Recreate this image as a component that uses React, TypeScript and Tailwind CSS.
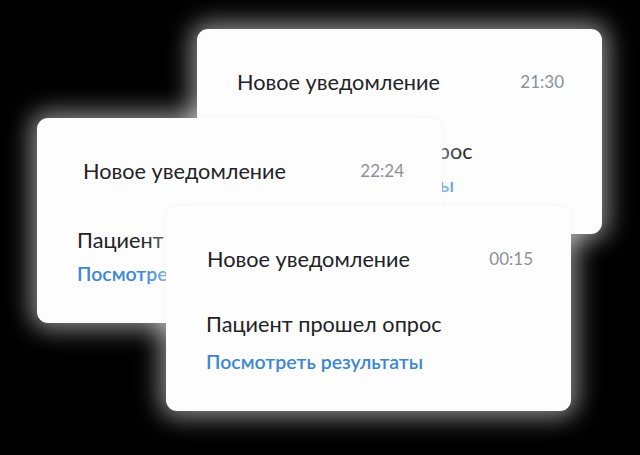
import React from 'react';

type Note = {
  id: string;
  time: string;
  pos: string; // card placement on the canvas
  titleGap: string;
  bodyGap: string;
  linkGap: string;
};

const notes: Note[] = [
  { id: 'a', time: '21:30', pos: 'z-10 left-[197px] top-[29px]', titleGap: 'ml-0', bodyGap: 'mt-[41px]', linkGap: 'mt-[8px]' },
  { id: 'b', time: '22:24', pos: 'z-20 left-[37px] top-[118px]', titleGap: 'ml-[6px]', bodyGap: 'mt-[41px]', linkGap: 'mt-[8px]' },
  { id: 'c', time: '00:15', pos: 'z-30 left-[166px] top-[206px]', titleGap: 'ml-px', bodyGap: 'mt-[37px]', linkGap: 'mt-[12px]' },
];

function NotificationCard({ note }: { note: Note }) {
  return (
    <div
      className={`absolute ${note.pos} flex h-[205px] w-[405px] flex-col rounded-[11px] bg-[#fdfdfd] pl-[40px] pr-[38px] pt-[39px] shadow-[0_0_24px_6px_rgba(255,255,255,0.55),0_0_6px_rgba(0,0,0,0.08)]`}
    >
      <div className="flex items-center justify-between">
        <span className={`${note.titleGap} whitespace-nowrap text-[21.7px] leading-[28px] text-[#222326]`}>
          Новое уведомление
        </span>
        <span className="text-[17px] leading-[28px] text-[#8c9099]">{note.time}</span>
      </div>
      <p className={`${note.bodyGap} whitespace-nowrap text-[21.7px] leading-[28px] text-[#222326]`}>
        Пациент прошел опрос
      </p>
      <a
        className={`${note.linkGap} block whitespace-nowrap text-[19.5px] font-semibold leading-[24px] text-[#3b86d6]`}
      >
        Посмотреть результаты
      </a>
    </div>
  );
}

export default function App() {
  return (
    <div className="relative h-[455px] w-[640px] overflow-hidden bg-black font-['Lato','Noto_Sans',sans-serif]">
      {notes.map((n) => (
        <NotificationCard key={n.id} note={n} />
      ))}
    </div>
  );
}
